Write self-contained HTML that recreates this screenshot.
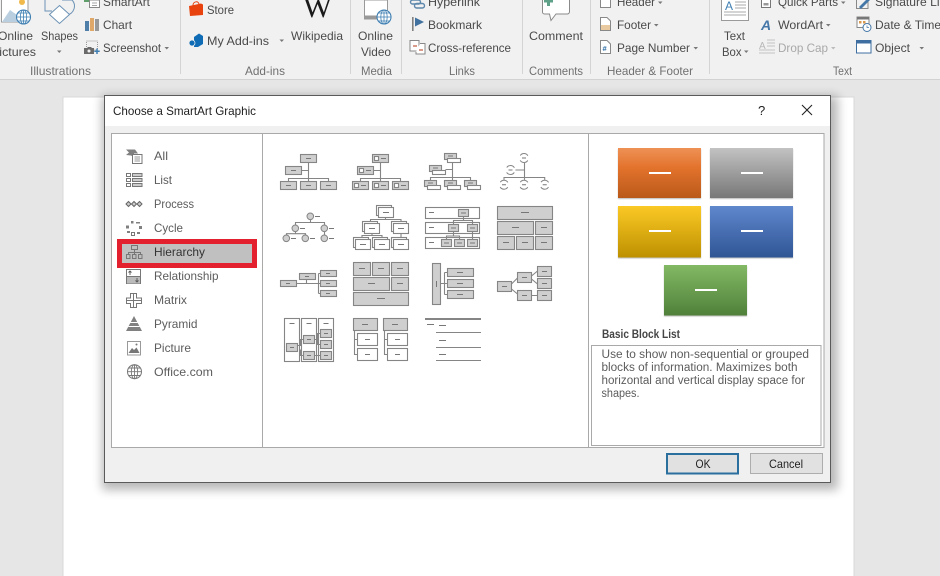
<!DOCTYPE html>
<html><head><meta charset="utf-8"><title>Choose a SmartArt Graphic</title>
<style>
html,body{margin:0;padding:0;background:#e6e6e6;width:940px;height:576px;overflow:hidden}
svg{display:block;filter:blur(.3px)}
text{font-family:"Liberation Sans",sans-serif;font-size:12px;fill:#4a4a4a}
.gl{fill:#707070}
.s{fill:#5c5c5c;font-size:12px}
.g{fill:#cfcfcf;stroke:#858585;stroke-width:1.1}
.w{fill:#fff;stroke:#858585;stroke-width:1.1}
.l{fill:none;stroke:#858585;stroke-width:1.1}
.d{fill:none;stroke:#777;stroke-width:1}
.ic{fill:none;stroke:#777;stroke-width:1}
.if{fill:#808080;stroke:none}
.ar{fill:#777}
.sep{stroke:#d4d4d4;stroke-width:1}
</style></head><body>
<svg width="940" height="576" viewBox="0 0 940 576" xmlns="http://www.w3.org/2000/svg">
<defs>
<linearGradient id="gO" x1="0" y1="0" x2="0" y2="1"><stop offset="0" stop-color="#ee9155"/><stop offset=".4" stop-color="#e2722c"/><stop offset="1" stop-color="#b9591a"/></linearGradient>
<linearGradient id="gG" x1="0" y1="0" x2="0" y2="1"><stop offset="0" stop-color="#c2c2c2"/><stop offset="1" stop-color="#777"/></linearGradient>
<linearGradient id="gY" x1="0" y1="0" x2="0" y2="1"><stop offset="0" stop-color="#fbc925"/><stop offset="1" stop-color="#bd9000"/></linearGradient>
<linearGradient id="gB" x1="0" y1="0" x2="0" y2="1"><stop offset="0" stop-color="#5f87cc"/><stop offset="1" stop-color="#2f5595"/></linearGradient>
<linearGradient id="gE" x1="0" y1="0" x2="0" y2="1"><stop offset="0" stop-color="#82b964"/><stop offset="1" stop-color="#50803a"/></linearGradient>
<filter id="sh" x="-5%" y="-5%" width="110%" height="110%"><feGaussianBlur stdDeviation="5"/></filter>
<filter id="sh2" x="-5%" y="-5%" width="110%" height="110%"><feGaussianBlur stdDeviation=".6"/></filter>
</defs>

<!-- backdrop -->
<rect width="940" height="576" fill="#e6e6e6"/>
<rect x="63" y="97" width="791" height="490" fill="#fff" stroke="#d8d8d8" stroke-width="1"/>

<!-- ribbon -->
<rect width="940" height="79" fill="#f1f1f1"/>
<rect y="79" width="940" height="1" fill="#d2d2d2"/>
<g class="sep">
<line x1="180.5" y1="0" x2="180.5" y2="74"/><line x1="350.5" y1="0" x2="350.5" y2="74"/><line x1="401.5" y1="0" x2="401.5" y2="74"/>
<line x1="522.5" y1="0" x2="522.5" y2="74"/><line x1="590.5" y1="0" x2="590.5" y2="74"/><line x1="709.5" y1="0" x2="709.5" y2="74"/>
</g>

<!-- ribbon icons: illustrations -->
<path d="M1.5 0V22H28V0" fill="#fff" stroke="#9a9a9a"/>
<path d="M2 22L10 10L17 15L22 11L28 16V22Z" fill="#b9cfe0"/>
<circle cx="22" cy="2" r="3" fill="#f0b94a"/>
<circle cx="23.5" cy="17" r="7" fill="#fff" stroke="#3f7fb2" stroke-width="1.1"/>
<path d="M16.5 17H30.5M23.5 10V24M18 13H29M18 21H29" stroke="#3f7fb2" stroke-width=".8" fill="none"/>
<ellipse cx="23.5" cy="17" rx="3.2" ry="7" fill="none" stroke="#3f7fb2" stroke-width=".8"/>
<path d="M45 0V11H52M62 0H72A9 9 0 0 1 67 15" fill="none" stroke="#6c92b5" stroke-width="1"/>
<path d="M59.5 5.5L69.5 14.5L59.5 23.5L49.5 14.5Z" fill="#fff" stroke="#6c92b5" stroke-width="1"/>
<path d="M84 0H90V2H84Z" fill="#5f9e6b"/>
<rect x="89.5" y="0" width="10" height="7.5" fill="#fff" stroke="#888"/>
<path d="M92 3H97M92 5.5H97" stroke="#888" stroke-width=".8"/>
<rect x="85" y="21" width="4" height="10" fill="#4f7ea8"/><rect x="90" y="18" width="4" height="13" fill="#e0a868"/><rect x="95" y="19" width="4" height="12" fill="#999"/>
<rect x="86.5" y="41" width="11" height="9" fill="none" stroke="#999" stroke-dasharray="1 1"/>
<path d="M84 48H87L88 47H91L92 48H94V54H84Z" fill="#6a6a6a"/><circle cx="89" cy="51" r="1.5" fill="#f1f1f1"/>
<path d="M97 48.5V54M94.3 51.3H99.7" stroke="#3f7fb2" stroke-width="1.5"/>

<!-- add-ins icons -->
<path d="M189 6L201 3.5L203 4.5V15L190 16Z" fill="#e8430f"/>
<path d="M193 5.5C193 1 199 .5 199 4.5" fill="none" stroke="#e8430f" stroke-width="1"/>
<path d="M194 37L199 33.5L203 36V44L198 47H194Z" fill="#0f6cb5"/>
<circle cx="192" cy="43" r="3" fill="#0f6cb5" stroke="#f1f1f1" stroke-width=".8"/>
<text x="303" y="17" textLength="29" lengthAdjust="spacingAndGlyphs" style="font-family:'Liberation Serif',serif;font-size:30px;fill:#1a1a1a">W</text>

<!-- media icon -->
<rect x="364.5" y="0" width="23" height="19" fill="#fff" stroke="#999"/>
<rect x="365" y="15.5" width="12" height="3" fill="#999"/>
<circle cx="384" cy="17" r="7" fill="#fff" stroke="#3f7fb2" stroke-width="1.1"/>
<path d="M377 17H391M384 10V24M378.5 13H389.5M378.5 21H389.5" stroke="#3f7fb2" stroke-width=".8" fill="none"/>
<ellipse cx="384" cy="17" rx="3.2" ry="7" fill="none" stroke="#3f7fb2" stroke-width=".8"/>

<!-- links icons -->
<rect x="410.5" y="0" width="10" height="4" rx="2" fill="none" stroke="#5d87ab" stroke-width="1.4"/>
<rect x="414.5" y="3.5" width="10" height="4.5" rx="2.2" fill="none" stroke="#5d87ab" stroke-width="1.4"/>
<rect x="412" y="17" width="1.6" height="14" fill="#808080"/>
<path d="M415 17.5L424 22L415 26.5Z" fill="#41729f"/>
<path d="M419 47V40.5H410V51H419" fill="#fff" stroke="#888"/>
<path d="M413 46H417" stroke="#c0563c" stroke-width="1.2"/>
<path d="M420 43.5H425V54H416V52" fill="#fff" stroke="#888"/>
<path d="M419 50H423" stroke="#c0563c" stroke-width="1.2"/>

<!-- comment icon -->
<path d="M542.5 0V12A2 2 0 0 0 544.5 14H549.5L551 20.5L556 14H567A2.5 2.5 0 0 0 569.5 12V0" fill="#fff" stroke="#8a8a8a"/>
<rect x="544" y="0" width="9" height="2.5" fill="#5ea188"/><rect x="547" y="0" width="3" height="6" fill="#5ea188"/>

<!-- header footer icons -->
<path d="M600.5 0V7.5H610.5V0" fill="#fff" stroke="#888"/>
<path d="M600.5 17.5H607L610.500 21V30.5H600.5Z" fill="#fff" stroke="#888"/><rect x="601" y="25" width="9" height="5" fill="#e9c9a0"/>
<path d="M600.5 40.5H607L610.5 44V53.5H600.5Z" fill="#fff" stroke="#888"/>
<text x="602.5" y="51" style="font-size:7.5px;fill:#2f6ea5;font-weight:bold">#</text>

<!-- text group icons -->
<rect x="721.5" y="-2" width="27" height="22.5" fill="#fff" stroke="#9a9a9a"/>
<text x="725" y="10" style="font-size:12px;fill:#3f7fb2">A</text>
<path d="M735 2H746M735 5H746M735 8H746M724 12H746M724 15H746" stroke="#a8a8a8" stroke-width=".9"/>
<rect x="761.5" y="-2" width="9" height="9.5" fill="#fff" stroke="#777"/><rect x="763.5" y="3" width="5" height="2.5" fill="#999"/>
<text x="761" y="30" style="font-size:14px;font-style:italic;font-weight:bold;fill:#4477a8">A</text>
<text x="759" y="49" style="font-size:10px;fill:#b8b8b8">A</text>
<path d="M767 40H775M767 43H775M767 46H775M759 50H775M759 53H775" stroke="#c4c4c4" stroke-width=".9"/>
<path d="M856.5 0V8.5H868V0" fill="none" stroke="#888"/><path d="M859 7L866 0H870L861 9Z" fill="#4477a8"/>
<rect x="857" y="17" width="12" height="10.5" fill="#fff" stroke="#888"/><rect x="857" y="17" width="12" height="2.5" fill="#777"/>
<rect x="859" y="21" width="2.5" height="2.5" fill="#d99a50"/><rect x="863" y="21" width="2.5" height="2.5" fill="#d99a50"/>
<circle cx="867" cy="27.5" r="4" fill="#fff" stroke="#4477a8"/><path d="M867 25.5V27.5H869" stroke="#4477a8" stroke-width=".7" fill="none"/>
<rect x="856.5" y="40.5" width="14.5" height="12.5" fill="#fff" stroke="#3f6fa0"/><rect x="856.5" y="40.5" width="14.5" height="3" fill="#3f6fa0"/>

<!-- ribbon text -->
<text x="-2" y="40" textLength="35" lengthAdjust="spacingAndGlyphs">Online</text>
<text x="-9" y="56" textLength="45" lengthAdjust="spacingAndGlyphs">Pictures</text>
<text x="41" y="40" textLength="37" lengthAdjust="spacingAndGlyphs">Shapes</text>
<path d="M57 50.5H61.5L59.25 53Z" class="ar"/>
<text x="103" y="6" textLength="47" lengthAdjust="spacingAndGlyphs">SmartArt</text>
<text x="103" y="29" textLength="29" lengthAdjust="spacingAndGlyphs">Chart</text>
<text x="103" y="52" textLength="58" lengthAdjust="spacingAndGlyphs">Screenshot</text>
<path d="M164.5 47H169L166.75 49.5Z" class="ar"/>
<text class="gl" x="30" y="75" textLength="61" lengthAdjust="spacingAndGlyphs">Illustrations</text>
<text x="207" y="14" textLength="27" lengthAdjust="spacingAndGlyphs">Store</text>
<text x="207" y="45" textLength="62" lengthAdjust="spacingAndGlyphs">My Add-ins</text>
<path d="M279.5 39.5H284L281.75 42Z" class="ar"/>
<text x="291" y="40" textLength="52" lengthAdjust="spacingAndGlyphs">Wikipedia</text>
<text class="gl" x="245" y="75" textLength="40" lengthAdjust="spacingAndGlyphs">Add-ins</text>
<text x="358" y="40" textLength="35" lengthAdjust="spacingAndGlyphs">Online</text>
<text x="361" y="56" textLength="30" lengthAdjust="spacingAndGlyphs">Video</text>
<text class="gl" x="361" y="75" textLength="31" lengthAdjust="spacingAndGlyphs">Media</text>
<text x="428" y="6" textLength="52" lengthAdjust="spacingAndGlyphs">Hyperlink</text>
<text x="428" y="29" textLength="54" lengthAdjust="spacingAndGlyphs">Bookmark</text>
<text x="428" y="52" textLength="83" lengthAdjust="spacingAndGlyphs">Cross-reference</text>
<text class="gl" x="449" y="75" textLength="26" lengthAdjust="spacingAndGlyphs">Links</text>
<text x="529" y="40" textLength="54" lengthAdjust="spacingAndGlyphs">Comment</text>
<text class="gl" x="529" y="75" textLength="54" lengthAdjust="spacingAndGlyphs">Comments</text>
<text x="617" y="6" textLength="38" lengthAdjust="spacingAndGlyphs">Header</text>
<path d="M658 1.5H662.5L660.25 4Z" class="ar"/>
<text x="617" y="29" textLength="34" lengthAdjust="spacingAndGlyphs">Footer</text>
<path d="M654 24H658.5L656.25 26.5Z" class="ar"/>
<text x="617" y="52" textLength="73" lengthAdjust="spacingAndGlyphs">Page Number</text>
<path d="M693.5 47H698L695.75 49.5Z" class="ar"/>
<text class="gl" x="607" y="75" textLength="86" lengthAdjust="spacingAndGlyphs">Header &amp; Footer</text>
<text x="724" y="40" textLength="21" lengthAdjust="spacingAndGlyphs">Text</text>
<text x="722" y="56" textLength="19.5" lengthAdjust="spacingAndGlyphs">Box</text>
<path d="M744 50.5H748.5L746.25 53Z" class="ar"/>
<text x="778" y="6" textLength="60" lengthAdjust="spacingAndGlyphs">Quick Parts</text>
<path d="M841 1.5H845.5L843.25 4Z" class="ar"/>
<text x="778" y="29" textLength="45" lengthAdjust="spacingAndGlyphs">WordArt</text>
<path d="M826 24H830.5L828.25 26.5Z" class="ar"/>
<text x="778" y="52" textLength="50" lengthAdjust="spacingAndGlyphs" style="fill:#a8a8a8">Drop Cap</text>
<path d="M831 47H835.5L833.25 49.5Z" fill="#bbb"/>
<text x="875" y="6" textLength="78" lengthAdjust="spacingAndGlyphs">Signature Line</text>
<text x="875" y="29" textLength="66" lengthAdjust="spacingAndGlyphs">Date &amp; Time</text>
<text x="875" y="52" textLength="35" lengthAdjust="spacingAndGlyphs">Object</text>
<path d="M919.5 47H924L921.75 49.5Z" class="ar"/>
<text class="gl" x="833" y="75" textLength="19" lengthAdjust="spacingAndGlyphs">Text</text>

<!-- dialog -->
<rect x="102" y="96" width="736" height="394" fill="#000" opacity=".28" filter="url(#sh)"/>
<rect x="104.5" y="95.5" width="726" height="387" fill="#f0f0f0" stroke="#5a5a5a" stroke-width="1"/>
<rect x="105" y="96" width="725" height="30" fill="#fff"/>
<text x="113" y="115" textLength="143" lengthAdjust="spacingAndGlyphs" style="fill:#1e1e1e">Choose a SmartArt Graphic</text>
<text x="758" y="115" style="fill:#222;font-size:13px">?</text>
<path d="M802 105L812 115M812 105L802 115" stroke="#222" stroke-width="1.1" fill="none"/>

<rect x="111.5" y="133.5" width="712.5" height="314" fill="#fff" stroke="#a9a9a9"/>
<line x1="262.5" y1="134" x2="262.5" y2="447" stroke="#a9a9a9"/>
<line x1="588.5" y1="134" x2="588.5" y2="447" stroke="#a9a9a9"/>

<!-- left list -->
<rect x="119.5" y="241.5" width="135" height="24" fill="#c0c0c0" stroke="#e2202e" stroke-width="5"/>
<text class="s" x="154" y="160" textLength="14" lengthAdjust="spacingAndGlyphs">All</text>
<text class="s" x="154" y="184" textLength="18" lengthAdjust="spacingAndGlyphs">List</text>
<text class="s" x="154" y="208" textLength="40" lengthAdjust="spacingAndGlyphs">Process</text>
<text class="s" x="154" y="232" textLength="29" lengthAdjust="spacingAndGlyphs">Cycle</text>
<text x="154" y="256" textLength="51" lengthAdjust="spacingAndGlyphs" style="fill:#333">Hierarchy</text>
<text class="s" x="154" y="280" textLength="64.5" lengthAdjust="spacingAndGlyphs">Relationship</text>
<text class="s" x="154" y="304" textLength="33" lengthAdjust="spacingAndGlyphs">Matrix</text>
<text class="s" x="154" y="328" textLength="43.5" lengthAdjust="spacingAndGlyphs">Pyramid</text>
<text class="s" x="154" y="352" textLength="37" lengthAdjust="spacingAndGlyphs">Picture</text>
<text class="s" x="154" y="376" textLength="59" lengthAdjust="spacingAndGlyphs">Office.com</text>

<!-- left icons -->
<path d="M126 149.5H135L138 153.5H134V157L131 155.5L126 155L129 152.5Z" fill="#808080"/>
<rect x="132.5" y="154.5" width="9.5" height="9" fill="#fff" stroke="#777"/>
<path d="M134.5 157H140M134.5 159H140M134.5 161H140" stroke="#777" stroke-width=".8"/>
<g class="ic"><rect x="126.5" y="173.5" width="4" height="3"/><rect x="126.5" y="178.5" width="4" height="3"/><rect x="126.5" y="183.5" width="4" height="3"/></g>
<g fill="#ccc" stroke="#777"><rect x="132.5" y="173.5" width="9.5" height="3"/><rect x="132.5" y="178.5" width="9.5" height="3"/><rect x="132.5" y="183.5" width="9.5" height="3"/></g>
<path d="M126 204L128.5 201.500L131 204L128.500 206.500ZM131.500 204L134 201.500L136.500 204L134 206.500ZM137 204L139.500 201.500L142 204L139.500 206.500Z" fill="#ccc" stroke="#666"/>
<g class="if"><rect x="131" y="221" width="2.5" height="2.5"/><rect x="136" y="222" width="4" height="1.5"/><rect x="126" y="225.5" width="3" height="3"/><rect x="139" y="226" width="3" height="3"/><rect x="127" y="231" width="3" height="2"/><rect x="137" y="232" width="3" height="2"/></g>
<rect x="131.5" y="232.5" width="3" height="3" class="ic"/>
<g class="ic"><rect x="131.5" y="245.5" width="6" height="4"/><path d="M134.5 249.5V252.5M128.5 254.5V252.5H140.5V254.5M134.5 252.5V254.5"/><rect x="126.5" y="254.5" width="3.5" height="4"/><rect x="132.5" y="254.5" width="3.5" height="4"/><rect x="138.5" y="254.5" width="3.5" height="4"/></g>
<rect x="126.5" y="269.5" width="14" height="14" fill="#fff" stroke="#777"/>
<rect x="127" y="276.5" width="13" height="7" fill="#bbb"/><path d="M127 276.5H140.5" stroke="#777"/>
<path d="M130 275V271M128.5 272.5L130 271L131.5 272.5M137 278V282M135.5 280.5L137 282L138.5 280.5" stroke="#555" fill="none" stroke-width=".9"/>
<path d="M130.500 293.5H136.5V298H141.5V303.5H136.5V307.5H130.5V303.5H126.5V298H130.5Z" fill="#fff" stroke="#777"/>
<path d="M133.5 293.5V307.5M126.5 300.5H141.5" stroke="#777"/>
<path d="M134 316L142 331H126Z" fill="#808080"/><path d="M130.5 322.5H137.5M128.5 326.5H139.5" stroke="#fff" stroke-width="1"/>
<rect x="127.5" y="341.5" width="13" height="13.5" fill="#fff" stroke="#999"/>
<path d="M128.5 353L132 348L134 350L136.5 347.5L139.5 353Z" fill="#777"/><circle cx="136.5" cy="344.5" r="1" fill="#777"/>
<circle cx="134.5" cy="371.7" r="7" fill="#fff" stroke="#777"/>
<ellipse cx="134.5" cy="371.7" rx="3.2" ry="7" fill="none" stroke="#777" stroke-width=".9"/>
<path d="M127.5 371.7H141.5M134.5 364.7V378.7M128.8 368H140.2M128.8 375.5H140.2" stroke="#777" stroke-width=".9" fill="none"/>

<!-- thumb 1 -->
<g>
<path class="l" d="M308.5 162.5V181.5M301.5 170.5H308.5M288.5 181.5V178.500H328.5V181.5"/>
<rect class="g" x="300.5" y="154.5" width="16" height="8"/><rect class="g" x="285.5" y="166.5" width="16" height="8"/>
<rect class="g" x="280.5" y="181.5" width="16" height="8"/><rect class="g" x="300.5" y="181.5" width="16" height="8"/><rect class="g" x="320.5" y="181.5" width="16" height="8"/>
<path class="d" d="M306 158.5H311M291 170.5H296M286 185.5H291M306 185.5H311M326 185.5H331"/>
</g>
<!-- thumb 2 -->
<g>
<path class="l" d="M380.5 162.5V181.5M373.5 170.5H380.5M360.5 181.5V178.5H400.5V181.5"/>
<rect class="g" x="372.5" y="154.5" width="16" height="8"/><rect class="g" x="357.5" y="166.5" width="16" height="8"/>
<rect class="g" x="352.5" y="181.5" width="16" height="8"/><rect class="g" x="372.5" y="181.5" width="16" height="8"/><rect class="g" x="392.5" y="181.5" width="16" height="8"/>
<g class="w"><rect x="374.5" y="156.5" width="4" height="4"/><rect x="359.5" y="168.5" width="4" height="4"/><rect x="354.5" y="183.5" width="4" height="4"/><rect x="374.5" y="183.5" width="4" height="4"/><rect x="394.5" y="183.5" width="4" height="4"/></g>
<path class="d" d="M381 158.5H386M366 170.5H371M361 185.5H366M381 185.5H386M401 185.5H406"/>
</g>
<!-- thumb 3 -->
<g>
<path class="l" d="M452.5 162.5V180.5M445.5 169.5H452.5M430.5 180.5V177.5H470.5V180.5"/>
<rect class="g" x="444.5" y="153.5" width="12" height="6"/><rect class="w" x="447.5" y="158.5" width="13" height="4"/>
<rect class="g" x="429.5" y="165.5" width="12" height="6"/><rect class="w" x="432.5" y="170.5" width="13" height="4"/>
<rect class="g" x="424.5" y="180.5" width="12" height="6"/><rect class="w" x="427.5" y="185.5" width="13" height="4"/>
<rect class="g" x="444.5" y="180.5" width="12" height="6"/><rect class="w" x="447.5" y="185.5" width="13" height="4"/>
<rect class="g" x="464.5" y="180.5" width="12" height="6"/><rect class="w" x="467.5" y="185.5" width="13" height="4"/>
<path class="d" d="M448 156H453M433 168H438M428 183H433M448 183H453M468 183H473"/>
</g>
<!-- thumb 4 -->
<g>
<path class="l" d="M524.5 163V180M510 170H524.5M504 180V177.5H544.7V180"/>
<g fill="#fff"><circle cx="524" cy="158" r="5"/><circle cx="510.5" cy="170" r="5"/><circle cx="504" cy="184.7" r="5"/><circle cx="524" cy="184.7" r="5"/><circle cx="544.7" cy="184.7" r="5"/></g>
<g fill="none" stroke="#858585" stroke-dasharray="9 5.14" stroke-dashoffset="-2.57">
<circle cx="524" cy="158" r="4.5"/><circle cx="510.5" cy="170" r="4.5"/><circle cx="504" cy="184.7" r="4.5"/><circle cx="524" cy="184.7" r="4.5"/><circle cx="544.7" cy="184.7" r="4.5"/>
</g>
<path class="d" d="M522 158H526M508.5 170H512.5M502 184.7H506M522 184.7H526M542.7 184.7H546.7"/>
</g>
<!-- thumb 5 -->
<g>
<path class="l" d="M310.5 220V222.5M295.5 225V222.5H324.5V235M295.5 232V233.7M286.5 235V233.7H305.5V235"/>
<g fill="#cfcfcf" stroke="#858585"><circle cx="310.3" cy="216.3" r="3.3"/><circle cx="295.3" cy="228.3" r="3.3"/><circle cx="324.3" cy="228.3" r="3.3"/><circle cx="286.3" cy="238.3" r="3.3"/><circle cx="305.3" cy="238.3" r="3.3"/><circle cx="324.3" cy="238.3" r="3.3"/></g>
<path class="d" d="M315 216.5H320M300 228.5H305M329 228.5H334M291 238.5H296M310 238.5H315M329 238.5H334"/>
</g>
<!-- thumb 6 -->
<g>
<path class="l" d="M385.5 217.5V219.5M370.5 221V219.5H401V221M372 233.5V235.5M362 237V235.5H382V237M401 233.5V237"/>
<rect class="w" x="376.5" y="205.5" width="15" height="10"/><rect class="w" x="378.5" y="207.5" width="15" height="10"/>
<rect class="w" x="362.5" y="221.5" width="15" height="10"/><rect class="w" x="364.5" y="223.5" width="15" height="10"/>
<rect class="w" x="391.5" y="221.5" width="15" height="10"/><rect class="w" x="393.5" y="223.5" width="15" height="10"/>
<rect class="w" x="353.5" y="237.5" width="15" height="10"/><rect class="w" x="355.5" y="239.5" width="15" height="10"/>
<rect class="w" x="372.5" y="237.5" width="15" height="10"/><rect class="w" x="374.5" y="239.5" width="15" height="10"/>
<rect class="w" x="391.5" y="237.5" width="15" height="10"/><rect class="w" x="393.5" y="239.5" width="15" height="10"/>
<path class="d" d="M383 212.5H389M369 228.5H375M398 228.5H404M360 244.5H366M379 244.5H385M398 244.5H404"/>
</g>
<!-- thumb 7 -->
<g>
<rect class="w" x="425.5" y="207.5" width="54" height="11"/><rect class="w" x="425.5" y="222.5" width="54" height="11"/><rect class="w" x="425.5" y="237.5" width="54" height="11"/>
<path class="l" d="M463.5 216.5V220.5M453.5 224.5V220.5H472.5V224.5M453.5 231.5V236M446.5 239.5V236H459.5V239.5M472.5 231.5V239.5"/>
<rect class="g" x="458.5" y="209.5" width="10" height="7"/><rect class="g" x="448.5" y="224.5" width="10" height="7"/><rect class="g" x="467.5" y="224.5" width="10" height="7"/>
<rect class="g" x="441.5" y="239.5" width="10" height="7"/><rect class="g" x="454.5" y="239.5" width="10" height="7"/><rect class="g" x="467.5" y="239.5" width="10" height="7"/>
<path class="d" d="M429 212.5H434M429 227.5H434M429 242.5H434M461 213H466M451 228H456M470 228H475M444 243H449M457 243H462M470 243H475"/>
</g>
<!-- thumb 8 -->
<g>
<rect class="g" x="497.5" y="206.5" width="55" height="13"/><rect class="g" x="497.5" y="221.5" width="36" height="13"/><rect class="g" x="535.5" y="221.5" width="17" height="13"/>
<rect class="g" x="497.5" y="236.5" width="17" height="13"/><rect class="g" x="516.5" y="236.5" width="17" height="13"/><rect class="g" x="535.5" y="236.5" width="17" height="13"/>
<path class="d" d="M521 212.5H529M512 227.5H519M541 227.5H547M503 242.5H509M522 242.5H528M541 242.5H547"/>
</g>
<!-- thumb 9 -->
<g>
<path class="l" d="M296.5 283.5H320.5M306.5 279.5V283.5M318.5 273.5V293.5M318.5 273.5H320.5M318.5 293.5H320.5"/>
<rect class="g" x="280.5" y="280.5" width="16" height="6"/><rect class="g" x="299.5" y="273.5" width="16" height="6"/>
<rect class="g" x="320.5" y="270.5" width="16" height="6"/><rect class="g" x="320.5" y="280.5" width="16" height="6"/><rect class="g" x="320.5" y="290.5" width="16" height="6"/>
<path class="d" d="M286 283.5H290M305 276.5H309M326 273.5H330M326 283.5H330M326 293.5H330"/>
</g>
<!-- thumb 10 -->
<g>
<rect class="g" x="353.5" y="262.5" width="17" height="13"/><rect class="g" x="372.5" y="262.5" width="17" height="13"/><rect class="g" x="391.5" y="262.5" width="17" height="13"/>
<rect class="g" x="353.5" y="277.5" width="36" height="13"/><rect class="g" x="391.5" y="277.5" width="17" height="13"/><rect class="g" x="353.5" y="292.5" width="55" height="13"/>
<path class="d" d="M359 268.5H365M378 268.5H384M397 268.5H403M368 283.5H375M397 283.5H403M377 298.5H385"/>
</g>
<!-- thumb 11 -->
<g>
<path class="l" d="M440.5 283.5H447.5M444.5 272.5V294.5M444.5 272.5H447.5M444.5 294.5H447.5"/>
<rect class="g" x="432.5" y="263.5" width="8" height="41"/>
<rect class="g" x="447.5" y="268.5" width="26" height="8"/><rect class="g" x="447.5" y="279.5" width="26" height="8"/><rect class="g" x="447.5" y="290.5" width="26" height="8"/>
<path class="d" d="M436.5 281V287M457 272.5H463M457 283.5H463M457 294.5H463"/>
</g>
<!-- thumb 12 -->
<g>
<path class="l" d="M511.5 284L517.5 278M511.5 289L517.5 294M531.5 276L537.5 271M531.5 279L537.5 284M531.5 295.5H537.5"/>
<rect class="g" x="497.5" y="281.5" width="14" height="10"/><rect class="g" x="517.5" y="272.5" width="14" height="10"/><rect class="g" x="517.5" y="290.5" width="14" height="10"/>
<rect class="g" x="537.5" y="266.5" width="14" height="10"/><rect class="g" x="537.5" y="278.5" width="14" height="10"/><rect class="g" x="537.5" y="290.5" width="14" height="10"/>
<path class="d" d="M502 286.5H507M522 277.5H527M522 295.5H527M542 271.5H547M542 283.5H547M542 295.5H547"/>
</g>
<!-- thumb 13 -->
<g>
<rect class="w" x="284.5" y="318.5" width="15" height="43"/><rect class="w" x="301.5" y="318.5" width="15" height="43"/><rect class="w" x="318.5" y="318.5" width="15" height="43"/>
<path class="l" d="M297.5 345.5H300.5V339.5H303.5M300.5 349.5V355.5H303.5M314.5 339.5H317.5V333.5H320.5M317.5 339.5V344.5H320.5M314.5 355.5H320.5"/>
<rect class="g" x="286.5" y="343.5" width="11" height="8"/><rect class="g" x="303.5" y="335.5" width="11" height="8"/><rect class="g" x="303.5" y="351.5" width="11" height="8"/>
<rect class="g" x="320.5" y="329.5" width="11" height="8"/><rect class="g" x="320.5" y="340.5" width="11" height="8"/><rect class="g" x="320.5" y="351.5" width="11" height="8"/>
<path class="d" d="M289.5 323.5H294.5M306.5 323.5H311.5M323.5 323.5H328.5M290 347.5H294M307 339.5H311M307 355.5H311M324 333.5H328M324 344.5H328M324 355.5H328"/>
</g>
<!-- thumb 14 -->
<g>
<path class="l" d="M354.5 330.5V354.5H357.5M354.5 339.5H357.5M384.5 330.5V354.5H387.5M384.5 339.5H387.5"/>
<rect class="g" x="353.5" y="318.5" width="24" height="12"/><rect class="g" x="383.5" y="318.5" width="24" height="12"/>
<rect class="w" x="357.5" y="333.5" width="20" height="12"/><rect class="w" x="357.5" y="348.5" width="20" height="12"/>
<rect class="w" x="387.5" y="333.5" width="20" height="12"/><rect class="w" x="387.5" y="348.5" width="20" height="12"/>
<path class="d" d="M362 324.5H368M392 324.5H398M365 339.5H370M365 354.5H370M395 339.5H400M395 354.5H400"/>
</g>
<!-- thumb 15 -->
<g>
<rect x="425" y="318" width="56" height="2" fill="#858585"/>
<path class="l" d="M436 332.5H481M436 347.5H481M436 360.5H481"/>
<path class="d" d="M427 324.5H434M439 325.5H446M439 340.5H446M439 354.5H446"/>
</g>

<!-- preview blocks -->
<g fill="#888" opacity=".55" filter="url(#sh2)"><rect x="618" y="149" width="83" height="50"/><rect x="710" y="149" width="83" height="50"/><rect x="618" y="207" width="83" height="51.5"/><rect x="710" y="207" width="83" height="51.5"/><rect x="664" y="266" width="83" height="50.5"/></g>
<rect x="618" y="148" width="83" height="50" fill="url(#gO)"/>
<rect x="710" y="148" width="83" height="50" fill="url(#gG)"/>
<rect x="618" y="206" width="83" height="51.5" fill="url(#gY)"/>
<rect x="710" y="206" width="83" height="51.5" fill="url(#gB)"/>
<rect x="664" y="265" width="83" height="50.5" fill="url(#gE)"/>
<g fill="#fff"><rect x="649" y="172" width="22" height="2"/><rect x="741" y="172" width="22" height="2"/><rect x="649" y="230" width="22" height="2"/><rect x="741" y="230" width="22" height="2"/><rect x="695" y="289" width="22" height="2"/></g>

<text x="602" y="338" textLength="78" lengthAdjust="spacingAndGlyphs" style="font-weight:bold;font-size:11.5px;fill:#444">Basic Block List</text>
<rect x="591.5" y="345.5" width="229.5" height="100" fill="#fff" stroke="#a9a9a9"/>
<text class="s" x="601.5" y="358" textLength="207.5" lengthAdjust="spacingAndGlyphs" style="font-size:11.5px">Use to show non-sequential or grouped</text>
<text class="s" x="601.5" y="371" textLength="196" lengthAdjust="spacingAndGlyphs" style="font-size:11.5px">blocks of information. Maximizes both</text>
<text class="s" x="601.5" y="384" textLength="203.5" lengthAdjust="spacingAndGlyphs" style="font-size:11.5px">horizontal and vertical display space for</text>
<text class="s" x="601.5" y="397" textLength="38" lengthAdjust="spacingAndGlyphs" style="font-size:11.5px">shapes.</text>

<!-- buttons -->
<rect x="667" y="454" width="71" height="19.5" fill="#e1e1e1" stroke="#2a6f9e" stroke-width="2"/>
<text x="695.5" y="468" textLength="15" lengthAdjust="spacingAndGlyphs" style="fill:#222">OK</text>
<rect x="750.5" y="453.5" width="72" height="20" fill="#e1e1e1" stroke="#adadad"/>
<text x="769" y="468" textLength="34" lengthAdjust="spacingAndGlyphs" style="fill:#222">Cancel</text>
</svg>
</body></html>
